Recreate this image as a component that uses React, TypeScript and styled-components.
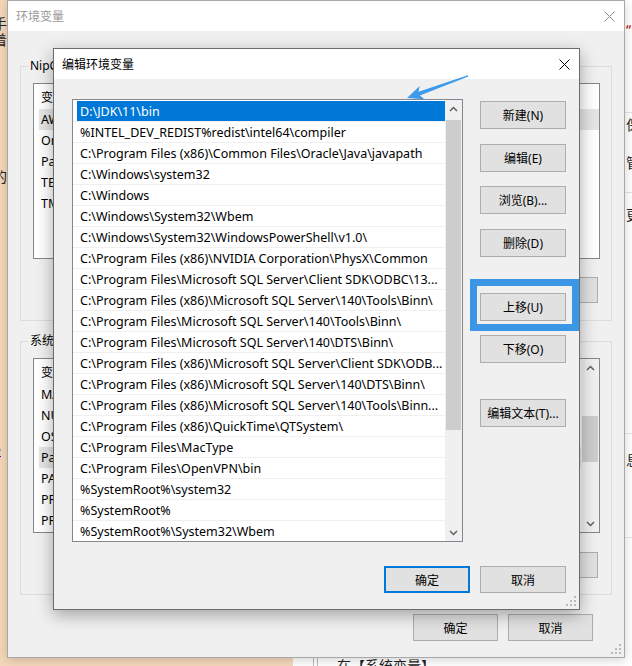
import React from "react";
import styled, { createGlobalStyle } from "styled-components";

const UI_FONT = `"Noto Sans", "Noto Sans CJK SC", sans-serif`;

const GlobalStyle = createGlobalStyle`
  html, body { margin: 0; padding: 0; background: #f5d8ba; }
  body { font-family: ${UI_FONT}; }
  * { box-sizing: border-box; }
`;

const Desktop = styled.div`
  position: relative;
  width: 632px;
  height: 666px;
  overflow: hidden;
  display: grid;
  grid-template-columns: 293px 1fr;
  background: #f5d8ba;
  font-family: ${UI_FONT};
`;

/* ---------- background web page ---------- */
const PeachPage = styled.div`
  display: flex;
  flex-direction: column;
  font-size: 14px;
`;

const EdgeText = styled.div<{ $mt: number; $link?: boolean }>`
  margin-top: ${(p) => p.$mt}px;
  margin-left: -7px;
  line-height: 16px;
  height: 16px;
  color: ${(p) => (p.$link ? "#1a0dab" : "#222")};
  text-decoration: ${(p) => (p.$link ? "underline" : "none")};
  white-space: nowrap;
`;

const WebPage = styled.div`
  background: #fff;
  display: flex;
  flex-direction: column;
`;

const SideNotes = styled.div`
  margin-left: 332px;
  display: flex;
  flex-direction: column;
  font-size: 14px;
`;

const NoteLine = styled.div<{ $mt: number; $color?: string }>`
  margin-top: ${(p) => p.$mt}px;
  line-height: 16px;
  height: 16px;
  padding-left: 1px;
  white-space: nowrap;
  color: ${(p) => p.$color || "#222"};
`;

const NoteRule = styled.div<{ $mt: number }>`
  margin-top: ${(p) => p.$mt}px;
  height: 1px;
  background: #e3e3e3;
`;

const Footer = styled.div`
  margin-top: auto;
  height: 10px;
  display: flex;
  align-items: flex-start;
  padding-left: 20px;
`;

const FooterBars = styled.div`
  width: 5px;
  height: 10px;
  border-left: 1px solid #bdbdbd;
  border-right: 1px solid #bdbdbd;
`;

const FooterText = styled.div`
  margin-left: 19px;
  margin-top: 1px;
  font-size: 14px;
  line-height: 18px;
  color: #222;
  white-space: nowrap;
`;

/* ---------- windows ---------- */
const Window = styled.div<{
  $left: number;
  $top: number;
  $width: number;
  $height: number;
  $active?: boolean;
}>`
  position: absolute;
  left: ${(p) => p.$left}px;
  top: ${(p) => p.$top}px;
  width: ${(p) => p.$width}px;
  height: ${(p) => p.$height}px;
  display: flex;
  flex-direction: column;
  background: #f0f0f0;
  border: 1px solid ${(p) => (p.$active ? "#6b6b6b" : "#a8a8a8")};
  box-shadow: ${(p) =>
    p.$active ? "0 5px 16px rgba(0,0,0,0.33)" : "0 2px 10px rgba(0,0,0,0.18)"};
`;

const TitleBar = styled.div<{ $active?: boolean }>`
  flex: none;
  height: 30px;
  background: #fff;
  display: flex;
  align-items: center;
  justify-content: space-between;
  padding: 0 9px 0 8px;
  font-size: 12px;
  color: ${(p) => (p.$active ? "#000" : "#9a9a9a")};
`;

const CloseGlyph = ({ active }: { active?: boolean }) => (
  <svg width="11" height="11" viewBox="0 0 11 11">
    <path
      d="M0.5 0.5 L10.5 10.5 M10.5 0.5 L0.5 10.5"
      stroke={active ? "#000" : "#8c8c8c"}
      strokeWidth="1"
      fill="none"
    />
  </svg>
);

const Grip = styled.svg`
  position: absolute;
  right: 2px;
  bottom: 2px;
`;

const ResizeGrip = () => (
  <Grip width="11" height="11" viewBox="0 0 11 11">
    {[
      [8, 0],
      [8, 4],
      [8, 8],
      [4, 4],
      [4, 8],
      [0, 8],
    ].map(([x, y]) => (
      <rect key={`${x}-${y}`} x={x} y={y} width="2" height="2" fill="#bababa" />
    ))}
  </Grip>
);

const Button = styled.button<{ $w?: number; $h?: number; $default?: boolean; $mt?: number }>`
  flex: none;
  width: ${(p) => p.$w ?? 86}px;
  height: ${(p) => p.$h ?? 28}px;
  margin: ${(p) => p.$mt ?? 0}px 0 0 0;
  padding: 0;
  background: #e1e1e1;
  border: 1px solid ${(p) => (p.$default ? "#0078d7" : "#adadad")};
  box-shadow: ${(p) => (p.$default ? "inset 0 0 0 1px #0078d7" : "none")};
  font-family: ${UI_FONT};
  font-size: 12px;
  color: #000;
  white-space: nowrap;
`;

/* ---------- scrollbars ---------- */
const ScrollTrack = styled.div<{ $w: number }>`
  flex: none;
  width: ${(p) => p.$w}px;
  background: #f0f0f0;
  display: flex;
  flex-direction: column;
  align-items: center;
`;

const ScrollArrow = styled.div<{ $end?: boolean }>`
  flex: none;
  width: 100%;
  height: 17px;
  margin-top: ${(p) => (p.$end ? "auto" : "0")};
  display: flex;
  align-items: center;
  justify-content: center;
`;

const ScrollThumb = styled.div<{ $mt: number; $h: number }>`
  flex: none;
  margin-top: ${(p) => p.$mt}px;
  width: calc(100% - 2px);
  height: ${(p) => p.$h}px;
  background: #cdcdcd;
`;

const Chevron = ({ down }: { down?: boolean }) => (
  <svg width="9" height="6" viewBox="0 0 9 6">
    <path
      d={down ? "M1 1 L4.5 4.5 L8 1" : "M1 5 L4.5 1.5 L8 5"}
      stroke="#606060"
      strokeWidth="1.5"
      fill="none"
    />
  </svg>
);

const Scrollbar = ({ w, thumbTop, thumbH }: { w: number; thumbTop: number; thumbH: number }) => (
  <ScrollTrack $w={w}>
    <ScrollArrow>
      <Chevron />
    </ScrollArrow>
    <ScrollThumb $mt={thumbTop} $h={thumbH} />
    <ScrollArrow $end>
      <Chevron down />
    </ScrollArrow>
  </ScrollTrack>
);

/* ---------- outer dialog (环境变量) ---------- */
const OuterBody = styled.div`
  flex: 1;
  display: flex;
  flex-direction: column;
  padding: 0 12px;
`;

const GroupBox = styled.fieldset<{ $mt: number; $pb: number }>`
  margin: ${(p) => p.$mt}px 0 0 0;
  padding: 9px 11px ${(p) => p.$pb}px 12px;
  border: 1px solid #dcdcdc;
  min-width: 0;
  display: flex;
  flex-direction: column;
`;

const Legend = styled.legend`
  font-size: 12px;
  line-height: 16px;
  padding: 0 2px;
  margin-left: -5px;
  color: #000;
`;

const VarList = styled.div<{ $h: number }>`
  height: ${(p) => p.$h}px;
  background: #fff;
  border: 1px solid #828790;
  display: flex;
  overflow: hidden;
`;

const VarColumn = styled.div`
  flex: 1;
  display: flex;
  flex-direction: column;
  min-width: 0;
`;

const VarHeader = styled.div`
  flex: none;
  height: 25px;
  display: flex;
  align-items: center;
  padding-left: 7px;
  font-size: 12px;
  color: #000;
`;

const HeaderCell = styled.div<{ $w: number }>`
  width: ${(p) => p.$w}px;
`;

const VarRow = styled.div<{ $selected?: boolean }>`
  flex: none;
  height: 21px;
  margin-left: 5px;
  padding-left: 2px;
  display: flex;
  align-items: center;
  font-size: 12.5px;
  color: #000;
  white-space: nowrap;
  background: ${(p) => (p.$selected ? "#e5e5e5" : "transparent")};
`;

const VarName = styled.div`
  width: 170px;
  overflow: hidden;
`;

const ButtonRow = styled.div<{ $mt: number; $pr?: number; $gap?: number }>`
  margin-top: ${(p) => p.$mt}px;
  padding-right: ${(p) => p.$pr ?? 0}px;
  display: flex;
  justify-content: flex-end;
  gap: ${(p) => p.$gap ?? 10}px;
`;

/* ---------- inner dialog (编辑环境变量) ---------- */
const InnerBody = styled.div`
  flex: 1;
  display: flex;
  flex-direction: column;
  padding: 20px 13px 0 18px;
`;

const MainRow = styled.div`
  display: flex;
  gap: 17px;
`;

const PathList = styled.div`
  width: 391px;
  height: 443px;
  background: #fff;
  border: 1px solid #828790;
  display: flex;
  overflow: hidden;
`;

const PathRows = styled.div`
  flex: 1;
  min-width: 0;
  padding-top: 1px;
  display: flex;
  flex-direction: column;
  overflow: hidden;
`;

const PathRow = styled.div`
  flex: none;
  height: 21px;
  display: flex;
  border-bottom: 1px solid #f0f0f0;
`;

const PathCell = styled.div<{ $selected?: boolean }>`
  flex: 1;
  min-width: 0;
  margin-left: 4px;
  padding: 2px 0 0 3px;
  font-size: 12.5px;
  line-height: 18px;
  white-space: nowrap;
  overflow: hidden;
  color: ${(p) => (p.$selected ? "#fff" : "#000")};
  background: ${(p) => (p.$selected ? "#0078d7" : "transparent")};
`;

const ButtonColumn = styled.div`
  width: 86px;
  display: flex;
  flex-direction: column;
`;

const Highlighted = styled.div<{ $mt: number }>`
  position: relative;
  margin-top: ${(p) => p.$mt}px;
  display: flex;
`;

const HighlightFrame = styled.div`
  position: absolute;
  left: -10px;
  top: -14px;
  right: -13px;
  bottom: -10px;
  border: 7px solid #3c96e6;
  pointer-events: none;
`;

const Annotation = styled.svg`
  position: absolute;
  left: 0;
  top: 0;
  pointer-events: none;
`;

const pathEntries = [
  "D:\\JDK\\11\\bin",
  "%INTEL_DEV_REDIST%redist\\intel64\\compiler",
  "C:\\Program Files (x86)\\Common Files\\Oracle\\Java\\javapath",
  "C:\\Windows\\system32",
  "C:\\Windows",
  "C:\\Windows\\System32\\Wbem",
  "C:\\Windows\\System32\\WindowsPowerShell\\v1.0\\",
  "C:\\Program Files (x86)\\NVIDIA Corporation\\PhysX\\Common",
  "C:\\Program Files\\Microsoft SQL Server\\Client SDK\\ODBC\\13...",
  "C:\\Program Files (x86)\\Microsoft SQL Server\\140\\Tools\\Binn\\",
  "C:\\Program Files\\Microsoft SQL Server\\140\\Tools\\Binn\\",
  "C:\\Program Files\\Microsoft SQL Server\\140\\DTS\\Binn\\",
  "C:\\Program Files (x86)\\Microsoft SQL Server\\Client SDK\\ODB...",
  "C:\\Program Files (x86)\\Microsoft SQL Server\\140\\DTS\\Binn\\",
  "C:\\Program Files (x86)\\Microsoft SQL Server\\140\\Tools\\Binn...",
  "C:\\Program Files (x86)\\QuickTime\\QTSystem\\",
  "C:\\Program Files\\MacType",
  "C:\\Program Files\\OpenVPN\\bin",
  "%SystemRoot%\\system32",
  "%SystemRoot%",
  "%SystemRoot%\\System32\\Wbem",
];

const userVars = ["AWS_SDK_HOME", "OneDrive", "Path", "TEMP", "TMP"];
const systemVars = [
  "MAVEN_HOME",
  "NUMBER_OF_PROCESSORS",
  "OS",
  "Path",
  "PATHEXT",
  "PROCESSOR_ARCHITECTURE",
  "PROCESSOR_IDENTIFIER",
];

export default function App() {
  return (
    <>
      <GlobalStyle />
      <Desktop>
        <PeachPage>
          <EdgeText $mt={16}>手</EdgeText>
          <EdgeText $mt={0}>着</EdgeText>
          <EdgeText $mt={72}>/</EdgeText>
          <EdgeText $mt={33}>的</EdgeText>
          <EdgeText $mt={257} $link>
            e
          </EdgeText>
        </PeachPage>

        <WebPage>
          <SideNotes>
            <NoteLine $mt={22} $color="#c00000">
              “Path”
            </NoteLine>
            <NoteRule $mt={74} />
            <NoteLine $mt={4}>保存</NoteLine>
            <NoteLine $mt={22}>管理</NoteLine>
            <NoteRule $mt={21} />
            <NoteLine $mt={14}>更改</NoteLine>
            <NoteRule $mt={210} />
            <NoteLine $mt={18}>息</NoteLine>
            <NoteRule $mt={69} />
          </SideNotes>
          <Footer>
            <FooterBars />
            <FooterText>在【系统变量】</FooterText>
          </Footer>
        </WebPage>

        {/* outer dialog */}
        <Window $left={7} $top={0} $width={618} $height={658}>
          <TitleBar>
            <span>环境变量</span>
            <CloseGlyph />
          </TitleBar>
          <OuterBody>
            <GroupBox $mt={27} $pb={17}>
              <Legend>NipCoder 的用户变量(U)</Legend>
              <VarList $h={176}>
                <VarColumn>
                  <VarHeader>
                    <HeaderCell $w={170}>变量</HeaderCell>
                    <HeaderCell $w={200}>值</HeaderCell>
                  </VarHeader>
                  {userVars.map((v, i) => (
                    <VarRow key={v} $selected={i === 0}>
                      <VarName>{v}</VarName>
                    </VarRow>
                  ))}
                </VarColumn>
              </VarList>
              <ButtonRow $mt={18} $pr={2}>
                <Button $w={86} $h={26}>新建(N)...</Button>
                <Button $w={86} $h={26}>编辑(E)...</Button>
                <Button $w={86} $h={26}>删除(D)</Button>
              </ButtonRow>
            </GroupBox>

            <GroupBox $mt={12} $pb={16}>
              <Legend>系统变量(S)</Legend>
              <VarList $h={175}>
                <VarColumn>
                  <VarHeader>
                    <HeaderCell $w={170}>变量</HeaderCell>
                    <HeaderCell $w={200}>值</HeaderCell>
                  </VarHeader>
                  {systemVars.map((v, i) => (
                    <VarRow key={v + i} $selected={i === 3}>
                      <VarName>{v}</VarName>
                    </VarRow>
                  ))}
                </VarColumn>
                <Scrollbar w={18} thumbTop={40} thumbH={46} />
              </VarList>
              <ButtonRow $mt={19} $pr={2}>
                <Button $w={86} $h={26}>新建(W)...</Button>
                <Button $w={86} $h={26}>编辑(I)...</Button>
                <Button $w={86} $h={26}>删除(L)</Button>
              </ButtonRow>
            </GroupBox>

            <ButtonRow $mt={19} $pr={19}>
              <Button $w={85} $h={27}>确定</Button>
              <Button $w={85} $h={27}>取消</Button>
            </ButtonRow>
          </OuterBody>
          <ResizeGrip />
        </Window>

        {/* inner dialog */}
        <Window $left={53} $top={48} $width={527} $height={562} $active>
          <TitleBar $active>
            <span>编辑环境变量</span>
            <CloseGlyph active />
          </TitleBar>
          <InnerBody>
            <MainRow>
              <PathList>
                <PathRows>
                  {pathEntries.map((p, i) => (
                    <PathRow key={i}>
                      <PathCell $selected={i === 0}>{p}</PathCell>
                    </PathRow>
                  ))}
                </PathRows>
                <Scrollbar w={17} thumbTop={3} thumbH={310} />
              </PathList>
              <ButtonColumn>
                <Button $mt={2}>新建(N)</Button>
                <Button $mt={15}>编辑(E)</Button>
                <Button $mt={14}>浏览(B)...</Button>
                <Button $mt={15}>删除(D)</Button>
                <Highlighted $mt={36}>
                  <Button>上移(U)</Button>
                  <HighlightFrame />
                </Highlighted>
                <Button $mt={14}>下移(O)</Button>
                <Button $mt={36}>编辑文本(T)...</Button>
              </ButtonColumn>
            </MainRow>
            <ButtonRow $mt={24}>
              <Button $w={86} $h={27} $default>
                确定
              </Button>
              <Button $w={86} $h={27}>
                取消
              </Button>
            </ButtonRow>
          </InnerBody>
          <ResizeGrip />
        </Window>

        <Annotation width="632" height="666" viewBox="0 0 632 666">
          <polygon
            points="407,98 419.7,86 418.5,91.7 467.8,75.3 468.3,76.6 419.9,95.5 424.4,99.2"
            fill="#3d9be9"
          />
        </Annotation>
      </Desktop>
    </>
  );
}
